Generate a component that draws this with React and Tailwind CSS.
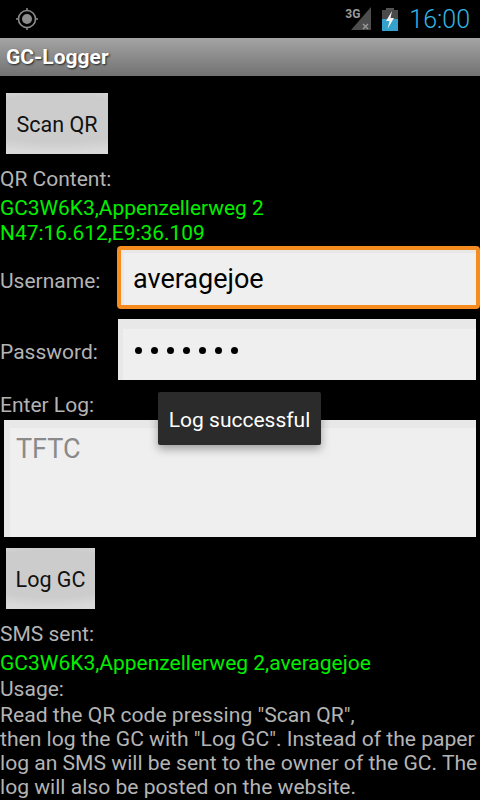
import React from "react";

function GpsIcon() {
  return (
    <svg width="24" height="24" viewBox="0 0 24 24" className="ml-[15px]">
      <circle cx="12" cy="12" r="8.5" fill="none" stroke="#8c8c8c" strokeWidth="1.6" />
      <circle cx="12" cy="12" r="5" fill="#8c8c8c" />
      <path d="M12 1v3M12 20v3M1 12h3M20 12h3" stroke="#8c8c8c" strokeWidth="1.5" />
    </svg>
  );
}

function SignalIcon() {
  return (
    <div className="relative w-[32px] h-[24px]">
      <svg width="32" height="24" viewBox="0 0 32 24" className="absolute left-0 top-0">
        <path d="M11 23 L31 0 V23 Z" fill="#4d4d4d" />
        <path d="M23 17l5 5M28 17l-5 5" stroke="#9a9a9a" strokeWidth="1.4" />
      </svg>
      <span className="absolute left-[5px] top-[0px] text-[12px] leading-[14px] font-bold text-[#9a9a9a]">3G</span>
    </div>
  );
}

function BatteryIcon() {
  return (
    <svg width="16" height="23" viewBox="0 0 16 23">
      <rect x="4" y="0" width="8" height="2" fill="#555" />
      <rect x="0" y="2" width="16" height="21" fill="#4a4a4a" />
      <rect x="0" y="11" width="16" height="12" fill="#33a1c9" />
      <path d="M10 3 L4 13 H7.5 L5.5 21 L12 10 H8.5 Z" fill="#f2f2f2" />
    </svg>
  );
}

function AndroidButton({ label, width }) {
  return (
    <button
      className={`${width} h-[61px] ml-[6px] pt-[3px] bg-[radial-gradient(ellipse_120%_55%_at_50%_42%,#cccccc_70%,#d9d9d9_100%)] text-[21.5px] text-[#111]`}
    >
      {label}
    </button>
  );
}

export default function App() {
  return (
    <div className="relative w-[480px] h-[800px] overflow-hidden bg-black text-[#b4b4b4] text-[21px] leading-[24px] font-['Roboto',sans-serif]">
      {/* Status bar */}
      <div className="h-[38px] flex items-center">
        <GpsIcon />
        <div className="ml-auto flex items-center pr-[10px]">
          <SignalIcon />
          <div className="ml-[10px]">
            <BatteryIcon />
          </div>
          <span className="ml-[11px] pt-[2px] text-[25px] leading-[30px] font-light text-[#33b5e5]">16:00</span>
        </div>
      </div>

      {/* Title bar */}
      <div className="h-[38px] flex items-center pl-[6px] bg-gradient-to-b from-[#a4a4a4] to-[#727272]">
        <span className="text-[21px] font-bold text-white [text-shadow:1px_1px_2px_#222]">GC-Logger</span>
      </div>

      <div className="pt-[17px]">
        <AndroidButton label="Scan QR" width="w-[102px]" />

        <div className="mt-[13px]">QR Content:</div>
        <div className="mt-[5px] text-[#00f000] text-[20.9px] leading-[25px]">
          GC3W6K3,Appenzellerweg 2
          <br />
          N47:16.612,E9:36.109
        </div>

        {/* Login fields */}
        <div className="flex items-center">
          <span className="w-[117px] pt-[6px]">Username:</span>
          <div className="w-[363px] h-[63px] flex items-center pl-[12px] pt-[2px] bg-[#efefef] border-[4px] border-[#f68b1f] rounded-[4px] text-[27px] text-black shadow-[inset_3px_3px_0_#e8e8e8]">
            averagejoe
          </div>
        </div>
        <div className="mt-[10px] flex items-center">
          <span className="w-[118px] pt-[4px]">Password:</span>
          <div className="w-[358px] h-[61px] flex items-center gap-[9px] pl-[17px] pt-[2px] bg-[#efefef] shadow-[inset_5px_10px_0_#e8e8e8]">
            {[0, 1, 2, 3, 4, 5, 6].map((i) => (
              <span key={i} className="w-[7px] h-[7px] rounded-full bg-black" />
            ))}
          </div>
        </div>

        <div className="mt-[13px]">Enter Log:</div>
        <div className="mt-[3px] ml-[4px] w-[472px] h-[117px] pl-[12px] pt-[13px] bg-[#efefef] text-[27px] leading-[32px] text-[#8a8a8a] shadow-[inset_6px_8px_0_#e8e8e8]">
          TFTC
        </div>

        <div className="mt-[11px]">
          <AndroidButton label="Log GC" width="w-[89px]" />
        </div>

        <div className="mt-[13px]">SMS sent:</div>
        <div className="mt-[5px] text-[#00f000]">GC3W6K3,Appenzellerweg 2,averagejoe</div>
        <div className="mt-[2px] whitespace-nowrap">Usage:</div>
        <div className="mt-[2px] text-[21.1px] whitespace-nowrap">
          Read the QR code pressing "Scan QR",
          <br />
          then log the GC with "Log GC". Instead of the paper
          <br />
          log an SMS will be sent to the owner of the GC. The
          <br />
          log will also be posted on the website.
        </div>
      </div>

      {/* Toast */}
      <div className="absolute left-[158px] top-[392px] w-[163px] h-[53px] flex items-center justify-center pt-[2px] rounded-[2px] bg-[#2b2b2b] text-white text-[21px] shadow-[0_4px_10px_rgba(0,0,0,0.35)]">
        Log successful
      </div>
    </div>
  );
}
